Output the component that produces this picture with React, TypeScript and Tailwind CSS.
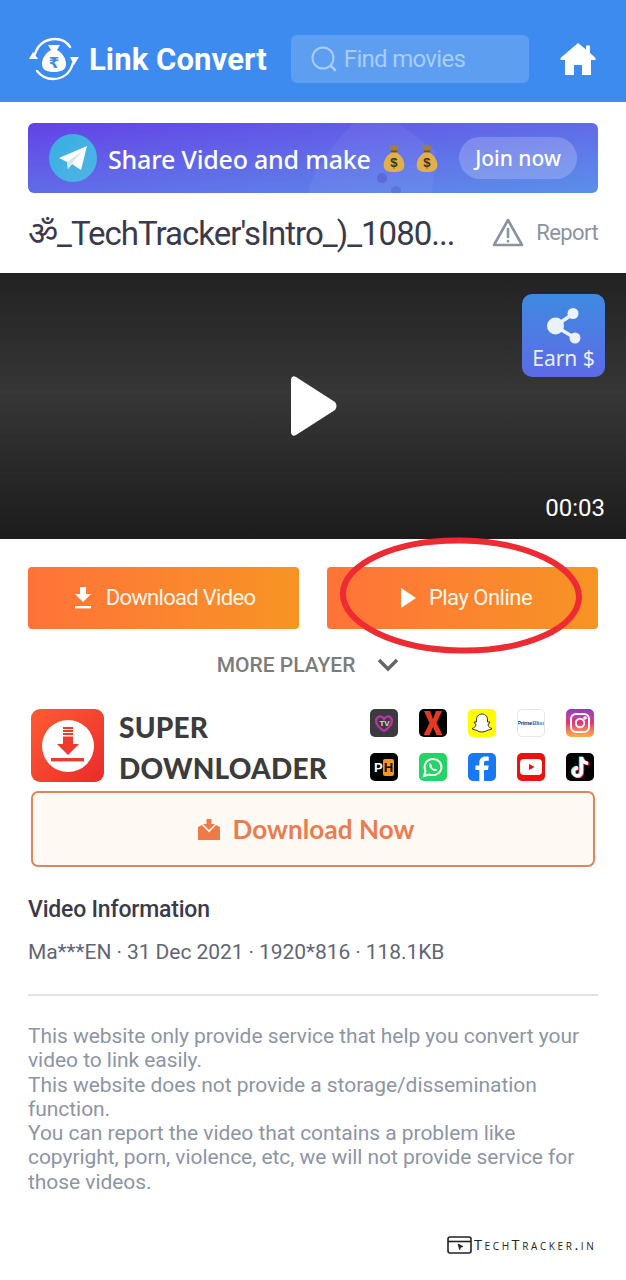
import React from "react";

const Bag = () => (
  <svg width="24" height="30" viewBox="0 0 24 32">
    <path d="M7 1 L10 4 L12 1.5 L14 4 L17 1 L15 9 L9 9 Z" fill="#a87f2e" />
    <rect x="8.5" y="8" width="7" height="2.5" rx="1" fill="#6f5320" />
    <path d="M9 10 C3 14 1 19 1 24 C1 29 5 31 12 31 C19 31 23 29 23 24 C23 19 21 14 15 10 Z" fill="#e0b04a" />
    <text x="12" y="26" textAnchor="middle" fontSize="14" fontWeight="700" fill="#3d3320" fontFamily="Liberation Sans, sans-serif">$</text>
  </svg>
);

const Tile = ({ className, children }: { className: string; children: React.ReactNode }) => (
  <div className={`w-7 h-7 rounded-[5px] flex items-center justify-center overflow-hidden ${className}`}>{children}</div>
);

export default function App() {
  return (
    <div className="relative w-[626px] h-[1280px] bg-white overflow-hidden font-['Roboto',sans-serif]">
      {/* Header */}
      <header className="h-[102px] bg-[#3d8bee] flex items-center pl-7 pr-[30px] pt-[16px]">
        <svg width="52" height="46" viewBox="0 0 52 46" className="shrink-0 -mt-[1px]">
          <g fill="none" stroke="#fff" strokeWidth="2.4" strokeLinecap="round">
            <path d="M7 18 C10 8 18 3 27 3 C34 3 39 6 42 11" />
            <path d="M45 27 C42 38 34 43 25 43 C18 43 13 40 9 35" />
          </g>
          <path d="M1 23 L5 16 L10 23 Z" fill="#fff" />
          <path d="M42 21 L51 21 L46 29 Z" fill="#fff" />
          <path d="M20 9 L32 9 L29 14 C36 18 38 24 38 28 C38 34 33 36 26 36 C19 36 14 34 14 28 C14 24 16 18 23 14 Z" fill="#fff" />
          <text x="26" y="32" textAnchor="middle" fontSize="15" fontWeight="700" fill="#3d8bee" fontFamily="DejaVu Sans, sans-serif">₹</text>
        </svg>
        <span className="ml-[9px] text-[31px] leading-none font-bold text-white tracking-[0.1px] whitespace-nowrap font-['Roboto',sans-serif]">Link Convert</span>
        <div className="ml-[24px] w-[238px] h-12 rounded-md bg-white/17 flex items-center pl-5 shrink-0">
          <svg width="26" height="26" viewBox="0 0 26 26" fill="none" stroke="#a9cdf8" strokeWidth="2" strokeLinecap="round">
            <circle cx="12" cy="12" r="10.5" />
            <path d="M20 20 L24 24" strokeWidth="2.6" />
          </svg>
          <span className="ml-[7px] text-[24px] text-[#a9cdf8] leading-none font-['Roboto',sans-serif] tracking-[-0.7px]">Find movies</span>
        </div>
        <svg width="36" height="34" viewBox="0 0 36 34" className="ml-auto shrink-0">
          <path d="M18 1 L26 7.5 L26 3.5 L30 3.5 L30 11 L35.5 16 L35.5 18 L31 18 L31 33 L22 33 L22 23 L14 23 L14 33 L5 33 L5 18 L0.5 18 L0.5 16 Z" fill="#fff" />
        </svg>
      </header>

      <div className="px-7">
        {/* Banner */}
        <div className="relative mt-[21px] h-[70px] rounded-md overflow-hidden bg-gradient-to-br from-[#6340e6] to-[#5b8fe9] flex items-center pl-[21px] pr-[21px]">
          <svg className="absolute left-[280px] top-0" width="160" height="70" viewBox="0 0 160 70">
            <path d="M46 0 L90 0 L128 28 L124 70 L0 70 C4 50 24 20 46 0 Z" fill="#fff" fillOpacity="0.05" />
            <circle cx="74" cy="55" r="5" fill="#5c68dc" />
            <circle cx="88" cy="68" r="5" fill="#5c74e0" />
          </svg>
          <div className="relative w-12 h-12 rounded-full bg-gradient-to-br from-[#37aee2] to-[#4fb4e6] flex items-center justify-center shrink-0">
            <svg width="30" height="28" viewBox="0 0 30 28">
              <path d="M1 14 L29 2 L23 26 L14 20 L10 25 L9 18 Z" fill="#fff" />
              <path d="M9 18 L24 7 L13 20 L10 25 Z" fill="#d5e6f3" />
            </svg>
          </div>
          <span className="relative ml-[11px] mt-[2px] text-[25px] leading-none text-white font-medium whitespace-nowrap font-['Noto_Sans',sans-serif] tracking-[-0.2px]">Share Video and make</span>
          <div className="relative ml-[11px] flex gap-[9px] shrink-0"><Bag /><Bag /></div>
          <div className="relative ml-auto w-[118px] h-[42px] rounded-full bg-white/20 flex items-center justify-center text-[21px] font-medium text-white leading-none font-['Noto_Sans',sans-serif]">Join now</div>
        </div>

        {/* Title row */}
        <div className="flex items-center justify-between h-[80px]">
          <span className="text-[33px] leading-none text-[#3a3a4c] whitespace-nowrap tracking-[-1px] font-['Roboto','Noto_Sans','DejaVu_Sans',sans-serif]">ॐ_TechTracker'sIntro_)_1080...</span>
          <div className="flex items-center gap-3 shrink-0">
            <svg width="32" height="30" viewBox="0 0 32 30" fill="none" stroke="#8b93a3" strokeWidth="2.6" strokeLinejoin="round" strokeLinecap="round">
              <path d="M16 2 L30 27 L2 27 Z" />
              <path d="M16 11 L16 19" />
              <path d="M16 23 L16 23.2" />
            </svg>
            <span className="text-[22px] text-[#8b93a3] leading-none tracking-[-0.6px]">Report</span>
          </div>
        </div>
      </div>

      {/* Video */}
      <div className="relative h-[266px] bg-[linear-gradient(180deg,#222222_0%,#363636_45%,#1c1c1c_100%)] flex items-center justify-center">
        <svg width="48" height="60" viewBox="0 0 48 60" className="ml-[2px]">
          <path d="M1 3 L1 57 Q2 61 6 59 L45 34 Q48 30 45 26 L6 1 Q2 -1 1 3 Z" fill="#fff" />
        </svg>
        <div className="absolute left-[522px] top-[21px] w-[83px] h-[83px] rounded-[10px] bg-gradient-to-b from-[#3d8ae0] to-[#5b6ae6] flex flex-col items-center">
          <svg width="36" height="38" viewBox="0 0 36 38" className="mt-[13px]">
            <path d="M9 19 L27 7 M9 19 L29 31" stroke="#ecf2fb" strokeWidth="3.4" />
            <circle cx="9.5" cy="19" r="8.5" fill="#ecf2fb" />
            <circle cx="27" cy="6.5" r="5.5" fill="#ecf2fb" />
            <circle cx="29" cy="31" r="5.5" fill="#ecf2fb" />
          </svg>
          <span className="text-[21px] leading-none text-[#e8effb] mt-[3px] whitespace-nowrap font-['Noto_Sans',sans-serif]">Earn $</span>
        </div>
        <span className="absolute right-[21px] bottom-[19px] text-[24px] leading-none text-white">00:03</span>
      </div>

      <div className="px-7">
        {/* Buttons */}
        <div className="flex justify-between pt-[28px]">
          <div className="w-[271px] h-[62px] rounded-[4px] bg-gradient-to-r from-[#ff7238] to-[#f79423] flex items-center justify-center gap-[14px] pl-[2px] text-[22px] tracking-[-0.7px] text-[#fff5ea] leading-none">
            <svg width="18" height="22" viewBox="0 0 18 22" fill="#fff">
              <path d="M6 0 L12 0 L12 7 L17 7 L9 15 L1 7 L6 7 Z" />
              <rect x="1" y="19" width="16" height="2.4" />
            </svg>
            Download Video
          </div>
          <div className="w-[271px] h-[62px] rounded-[4px] bg-gradient-to-r from-[#ff7238] to-[#f79423] flex items-center justify-center gap-[13px] pl-[7px] text-[22px] tracking-[-0.5px] text-[#fff5ea] leading-none">
            <svg width="16" height="20" viewBox="0 0 16 20" fill="#fff"><path d="M1 0 L16 10 L1 20 Z" /></svg>
            Play Online
          </div>
        </div>

        {/* More player */}
        <div className="flex items-center justify-center gap-[22px] h-[72px] pr-[10px]">
          <span className="text-[21px] font-medium text-[#7c7c7c] leading-none">MORE PLAYER</span>
          <svg width="22" height="14" viewBox="0 0 22 14" fill="none" stroke="#666" strokeWidth="3.4"><path d="M2 2 L11 11 L20 2" /></svg>
        </div>

        {/* Ad */}
        <div className="mt-[8px] px-[3px]">
          <div className="flex h-[73px] items-stretch">
            <div className="w-[73px] h-[73px] rounded-[9px] bg-gradient-to-br from-[#ff5a33] to-[#e9282c] flex items-center justify-center shrink-0">
              <svg width="52" height="52" viewBox="0 0 52 52">
                <circle cx="26" cy="26" r="26" fill="#fff" />
                <path d="M21 8 H31 M21 11 H31 M21 14 H31" stroke="#ee3b2d" strokeWidth="1.8" />
                <path d="M21 16.5 H31 V24 H37 L26 35 L15 24 H21 Z" fill="#ee3b2d" />
                <rect x="9" y="38" width="33" height="3.4" fill="#ee3b2d" />
              </svg>
            </div>
            <div className="ml-[15px] flex flex-col justify-between font-['Lato',sans-serif] font-black text-[#3c3c3c] text-[28px] leading-[36px] tracking-[0.2px] -mb-[4px] whitespace-nowrap">
              <span>SUPER</span>
              <span>DOWNLOADER</span>
            </div>
            <div className="ml-auto mr-[1px] grid grid-cols-5 gap-x-[21px] gap-y-4 self-start">
              <Tile className="bg-[#3a3a40]">
                <svg width="24" height="24" viewBox="0 0 24 24">
                  <path d="M12 20 C4 15 3 10 5 7 C8 4 11 6 12 8 C13 6 17 4 19 7 C21 10 20 15 12 20 Z" fill="none" stroke="#b0379b" strokeWidth="2.4" />
                  <text x="12.5" y="15" textAnchor="middle" fontSize="8" fontWeight="700" fill="#ddd" fontFamily="Liberation Sans, sans-serif">TV</text>
                </svg>
              </Tile>
              <Tile className="bg-black">
                <svg width="24" height="26" viewBox="0 0 24 26"><path d="M3 1 L9 1 L12 9 L15 1 L21 1 L15.5 13 L21.5 25 L15.5 25 L12 17 L8.5 25 L2.5 25 L8.5 13 Z" fill="#e63a20" /></svg>
              </Tile>
              <Tile className="bg-[#fffc00]">
                <svg width="24" height="24" viewBox="0 0 24 24"><path d="M12 3 C16 3 17.5 6 17.5 9 L17.5 11 L20 11 L18 14 C18.5 16 20 17 22 17.5 C21 19 19 18.5 17 19.5 C15 21.5 9 21.5 7 19.5 C5 18.5 3 19 2 17.5 C4 17 5.5 16 6 14 L4 11 L6.5 11 L6.5 9 C6.5 6 8 3 12 3 Z" fill="#fff" stroke="#333" strokeWidth="1" /></svg>
              </Tile>
              <Tile className="bg-white border border-[#e6e6e6]">
                <span className="text-[6px] font-bold text-[#1d3f7a] leading-none whitespace-nowrap font-['Liberation_Sans',sans-serif] tracking-[-0.3px]">Prime<span className="text-[#2a80c9]">Bliss</span></span>
              </Tile>
              <Tile className="bg-gradient-to-b from-[#8a3ac8] via-[#e8306e] to-[#fbb03b]">
                <svg width="22" height="22" viewBox="0 0 22 22" fill="none" stroke="#fff" strokeWidth="2">
                  <rect x="2" y="2" width="18" height="18" rx="5" />
                  <circle cx="11" cy="11" r="4.2" />
                  <circle cx="16" cy="6" r="0.8" fill="#fff" />
                </svg>
              </Tile>
              <Tile className="bg-black">
                <span className="flex items-center text-[13px] font-bold leading-none font-['Liberation_Sans',sans-serif] text-white">P<span className="bg-[#f7971d] text-black rounded-[2px] px-[1px] py-[2px]">H</span></span>
              </Tile>
              <Tile className="bg-[#25d366]">
                <svg width="22" height="22" viewBox="0 0 22 22">
                  <path d="M2 20 L3.5 15 C1 10 4 3 11 3 C16 3 19.5 7 19.5 11 C19.5 17 13 20.5 7 18.5 Z" fill="none" stroke="#fff" strokeWidth="2" />
                  <path d="M8 7 C6.5 8 7 11 9 13 C11 15 14 16 15.5 14 L13.5 12.5 L12.5 13.3 C11 12.8 10 11.5 9.5 10.3 L10 9.3 Z" fill="#fff" />
                </svg>
              </Tile>
              <Tile className="bg-[#1877f2] items-end">
                <svg width="16" height="26" viewBox="0 0 16 26"><path d="M10 26 L10 15 L14 15 L14.6 10.5 L10 10.5 L10 8 C10 6.5 10.7 5.7 12.4 5.7 L14.8 5.7 L14.8 1.8 C14 1.6 12.7 1.5 11.5 1.5 C7.8 1.5 5.3 3.7 5.3 7.6 L5.3 10.5 L1.5 10.5 L1.5 15 L5.3 15 L5.3 26 Z" fill="#fff" /></svg>
              </Tile>
              <Tile className="bg-[#ee0f0f]">
                <svg width="22" height="16" viewBox="0 0 22 16"><rect width="22" height="16" rx="4" fill="#fff" /><path d="M9 5 L14.5 8 L9 11 Z" fill="#ee0f0f" /></svg>
              </Tile>
              <Tile className="bg-black">
                <svg width="22" height="24" viewBox="0 0 22 24" fill="none" strokeWidth="3.4">
                  <path d="M12.5 2 L12.5 16.5 C12.5 19.5 10.5 21 8.5 21 C6 21 4.5 19 4.5 17 C4.5 14.5 6.5 13 9 13 M12.5 2 C13 5.5 15.5 8 19 8.3" stroke="#25f4ee" transform="translate(-1,-0.6)" />
                  <path d="M12.5 2 L12.5 16.5 C12.5 19.5 10.5 21 8.5 21 C6 21 4.5 19 4.5 17 C4.5 14.5 6.5 13 9 13 M12.5 2 C13 5.5 15.5 8 19 8.3" stroke="#fe2c55" transform="translate(1,0.6)" />
                  <path d="M12.5 2 L12.5 16.5 C12.5 19.5 10.5 21 8.5 21 C6 21 4.5 19 4.5 17 C4.5 14.5 6.5 13 9 13 M12.5 2 C13 5.5 15.5 8 19 8.3" stroke="#fff" />
                </svg>
              </Tile>
            </div>
          </div>
          <div className="mt-[9px] h-[76px] rounded-[7px] border-2 border-[#e0845a] bg-[#fff9f4] flex items-center justify-center gap-[13px] pr-[14px]">
            <svg width="22" height="21" viewBox="0 0 22 21" fill="#ee7a4a">
              <path d="M8.5 0 H13.5 V5 H17 L11 11 L5 5 H8.5 Z" />
              <path d="M0 8 L4 6 L11 13.5 L18 6 L22 8 V21 H0 Z" />
            </svg>
            <span className="font-['Lato',sans-serif] font-bold text-[26px] leading-none text-[#ea7c4f] tracking-[0.1px]">Download Now</span>
          </div>
        </div>

        {/* Info */}
        <div className="mt-[31px] text-[23px] font-medium leading-none text-[#3a3a4c] tracking-[-0.2px]">Video Information</div>
        <div className="mt-[21px] text-[21px] leading-none text-[#5f6673] whitespace-nowrap tracking-[-0.07px]">Ma***EN · 31 Dec 2021 · 1920*816 · 118.1KB</div>
        <div className="mt-[31px] h-[2px] bg-[#e2e2e2]"></div>
        <p className="mt-[28px] text-[21px] leading-[24.3px] text-[#8d95a5] tracking-[-0.05px]">
          This website only provide service that help you convert your<br />
          video to link easily.<br />
          This website does not provide a storage/dissemination<br />
          function.<br />
          You can report the video that contains a problem like<br />
          copyright, porn, violence, etc, we will not provide service for<br />
          those videos.
        </p>
      </div>

      {/* Red annotation ellipse */}
      <svg className="absolute left-[338px] top-[534px] pointer-events-none" width="246" height="122" viewBox="0 0 246 122" fill="none">
        <ellipse cx="123" cy="61.5" rx="118" ry="55" stroke="#ee2a32" strokeWidth="6" transform="rotate(1 123 61)" />
      </svg>

      {/* Watermark */}
      <div className="absolute left-[447px] top-[1236px] flex items-center text-[#222]">
        <svg width="25" height="18" viewBox="0 0 25 18" fill="none" stroke="#222" strokeWidth="1.6">
          <rect x="1" y="1" width="23" height="16" rx="2" />
          <path d="M1 5.5 H24" />
          <path d="M11 8 L16 10.5 L13.5 11.3 L12.7 13.8 Z" fill="#222" strokeWidth="0.8" />
        </svg>
        <span className="ml-[2px] text-[14.5px] leading-none tracking-[2.6px] font-['Open_Sans',sans-serif] whitespace-nowrap [font-variant:small-caps]">TechTracker.in</span>
      </div>
    </div>
  );
}
